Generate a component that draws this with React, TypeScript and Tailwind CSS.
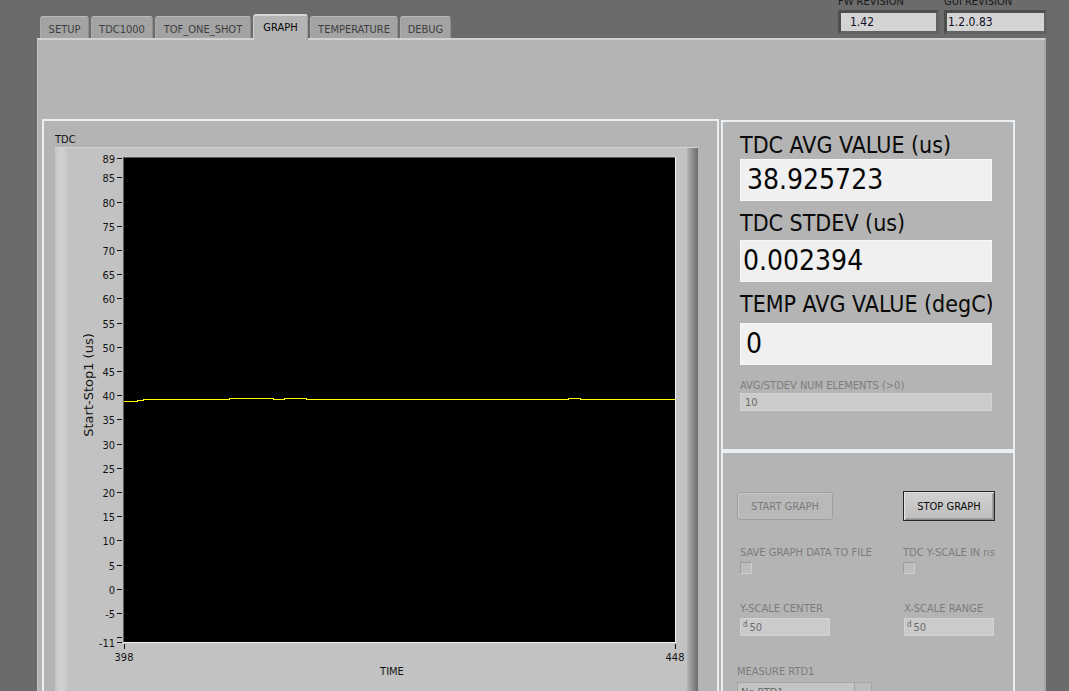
import React from "react";

const tabs: { label: string; w: string; active?: boolean }[] = [
  { label: "SETUP", w: "w-[49px]" },
  { label: "TDC1000", w: "w-[62px]" },
  { label: "TOF_ONE_SHOT", w: "w-[96px]" },
  { label: "GRAPH", w: "w-[55px]", active: true },
  { label: "TEMPERATURE", w: "w-[88px]" },
  { label: "DEBUG", w: "w-[51px]" },
];

const yTicks = [89, 85, 80, 75, 70, 65, 60, 55, 50, 45, 40, 35, 30, 25, 20, 15, 10, 5, 0, -5, -11];
const yOf = (v: number) => 494 - 4.84 * (v + 11);

const linePts: [number, number][] = [
  [124, 401], [137, 401], [137, 400], [143, 400], [143, 399], [229, 399], [229, 398],
  [273, 398], [273, 399], [284, 399], [284, 398], [306, 398], [306, 399], [568, 399],
  [568, 398], [580, 398], [580, 399], [675, 399],
];

function Graph() {
  const pts = linePts.map(([x, y]) => `${x - 67},${y - 147 - 0.5}`).join(" ");
  return (
    <svg width="620" height="560" className="block">
      <rect x="57" y="10" width="551" height="484" fill="#000" />
      <line x1="56.5" y1="9" x2="56.5" y2="495" stroke="#5c5c5c" />
      <line x1="56" y1="9.5" x2="609" y2="9.5" stroke="#5c5c5c" />
      <line x1="56" y1="494.5" x2="609" y2="494.5" stroke="#f4f4f4" />
      <line x1="608.5" y1="9" x2="608.5" y2="495" stroke="#f4f4f4" />
      <polyline points={pts} fill="none" stroke="#ffff00" strokeWidth="1" shapeRendering="crispEdges" />
      {yTicks.map((v) => {
        const y = Math.round(yOf(v)) + 0.5;
        return (
          <g key={v}>
            <line x1="50" y1={y} x2="55" y2={y} stroke="#111" />
            <text x="48" y={y + 4} textAnchor="end" fontSize="11" fill="#141414">
              {v}
            </text>
          </g>
        );
      })}
      <line x1="50" y1={Math.round(yOf(-10)) + 0.5} x2="55" y2={Math.round(yOf(-10)) + 0.5} stroke="#111" />
      <line x1="57.5" y1="496" x2="57.5" y2="501" stroke="#111" />
      <line x1="608.5" y1="496" x2="608.5" y2="501" stroke="#111" />
      <text x="57" y="513" textAnchor="middle" fontSize="11" fill="#141414">398</text>
      <text x="608" y="513" textAnchor="middle" fontSize="11" fill="#141414">448</text>
      <text x="325" y="527" textAnchor="middle" fontSize="11" fill="#141414">TIME</text>
      <text
        x="21"
        y="237"
        textAnchor="middle"
        dominantBaseline="central"
        fontSize="13"
        fill="#141414"
        fontFamily="'DejaVu Sans', sans-serif"
        transform="rotate(-90 21 237)"
      >
        Start-Stop1 (us)
      </text>
    </svg>
  );
}

function Rev({ label, value, w, pl }: { label: string; value: string; w: string; pl: string }) {
  return (
    <div className={`${w} flex flex-col`}>
      <div className="-mt-[5px] h-[13px] text-[11px] leading-[13px] text-[#1a1a1a] whitespace-nowrap">{label}</div>
      <div className="mt-[2px] h-[24px] border-[3px] border-t-[#4e4e4e] border-l-[#4e4e4e] border-r-[#626262] border-b-[#626262] bg-[#d4d4d4] flex items-center">
        <span className={`${pl} text-[12px] leading-[14px] text-[#10102a]`}>{value}</span>
      </div>
    </div>
  );
}

function BigField({ label, value, labelMt, boxMt, valuePl }: { label: string; value: string; labelMt: string; boxMt: string; valuePl: string }) {
  return (
    <>
      <div className={`${labelMt} text-[23px] leading-[25px] text-[#0a0a0a] whitespace-nowrap`}>{label}</div>
      <div className={`${boxMt} h-[42px] w-[252px] bg-[#f0f0f0] border border-[#f7f7f7] flex items-center`}>
        <span className={`${valuePl} text-[28px] leading-[40px] text-[#050505]`}>{value}</span>
      </div>
    </>
  );
}

function Check({ label }: { label: string }) {
  return (
    <div className="flex flex-col">
      <div className="text-[11px] leading-[13px] text-[#7c7c7c] whitespace-nowrap">{label}</div>
      <div className="mt-[3px] w-[12px] h-[12px] bg-[#bdbdbd] border border-t-[#9c9c9c] border-l-[#9c9c9c] border-r-[#cfcfcf] border-b-[#cfcfcf]" />
    </div>
  );
}

function Numeric({ label, value }: { label: string; value: string }) {
  return (
    <div className="flex flex-col">
      <div className="text-[11px] leading-[13px] text-[#7c7c7c] whitespace-nowrap">{label}</div>
      <div className="mt-[3px] w-[90px] h-[18px] bg-[#cbcbcb] border border-[#d3d3d3] flex items-center pl-[2px]">
        <span className="text-[8px] leading-[8px] text-[#666] self-start mt-[2px]">d</span>
        <span className="ml-[2px] text-[11px] leading-[13px] text-[#6a6a6a]">{value}</span>
      </div>
    </div>
  );
}

export default function App() {
  return (
    <div className="relative w-[1069px] h-[691px] overflow-hidden bg-[#6b6b6b] font-['DejaVu_Sans_Condensed','DejaVu_Sans',sans-serif] text-[11px] leading-[13px]">
      {/* header */}
      <div className="flex h-[38px]">
        <div className="flex items-end gap-[2px] pl-[40px]">
          {tabs.map((t) =>
            t.active ? (
              <div
                key={t.label}
                className={`${t.w} relative z-10 -mb-[3px] h-[27px] bg-[#b4b4b4] rounded-t-[3px] border-t-2 border-t-[#d6d6d6] border-l border-l-[#cdcdcd] border-r border-r-[#9a9a9a] text-center pt-[5px] text-[11px] leading-[13px] text-[#050505]`}
              >
                {t.label}
              </div>
            ) : (
              <div
                key={t.label}
                className={`${t.w} h-[22px] bg-[#a3a3a3] rounded-t-[3px] border-t border-t-[#b8b8b8] border-l border-l-[#adadad] border-r border-r-[#8e8e8e] text-center pt-[6px] text-[11px] leading-[13px] text-[#3e3e3e]`}
              >
                {t.label}
              </div>
            )
          )}
        </div>
        <div className="ml-auto mr-[22px] flex gap-[5px]">
          <Rev label="FW REVISION" value="1.42" w="w-[101px]" pl="pl-[9px]" />
          <Rev label="GUI REVISION" value="1.2.0.83" w="w-[103px]" pl="pl-[1px]" />
        </div>
      </div>

      {/* tab panel */}
      <div className="ml-[37px] w-[1009px] h-[653px] bg-[#b4b4b4] border-t-2 border-t-[#d0d0d0] border-l border-l-[#c6c6c6] border-r-2 border-r-[#a6a6a6]">
        <div className="flex items-start mt-[79px] ml-[4px]">
          {/* graph box */}
          <div className="w-[677px] h-[600px] border-2 border-[#e9eef3]">
            <div className="ml-[11px] mt-[12px] text-[11px] leading-[13px] text-[#111]">TDC</div>
            <div className="ml-[11px] mt-[1px] w-[643px] h-[560px] flex bg-[#c2c2c2] border-t border-t-[#d3d3d3]">
              <div className="w-[12px] h-full bg-linear-to-r from-[#c6c6c6] via-[#d2d2d2] to-[#c8c8c8]" />
              <Graph />
              <div className="w-[11px] h-full bg-linear-to-r from-[#b4b4b4] via-[#8e8e8e] to-[#6c6c6c]" />
            </div>
          </div>

          {/* right column */}
          <div className="ml-[2px] mt-[1px] w-[294px] flex flex-col">
            <div className="h-[331px] border-2 border-[#e9eef3] pl-[17px] pt-[11px] flex flex-col">
              <BigField label="TDC AVG VALUE (us)" value="38.925723" labelMt="mt-0" boxMt="mt-[1px]" valuePl="pl-[6px]" />
              <BigField label="TDC STDEV (us)" value="0.002394" labelMt="mt-[10px]" boxMt="mt-[4px]" valuePl="pl-[2px]" />
              <BigField label="TEMP AVG VALUE (degC)" value="0" labelMt="mt-[10px]" boxMt="mt-[6px]" valuePl="pl-[5px]" />
              <div className="mt-[14px] text-[11px] leading-[13px] text-[#7c7c7c] whitespace-nowrap">AVG/STDEV NUM ELEMENTS (&gt;0)</div>
              <div className="mt-[1px] w-[252px] h-[18px] bg-[#cbcbcb] border border-[#d3d3d3] flex items-center pl-[4px]">
                <span className="text-[11px] leading-[13px] text-[#6a6a6a]">10</span>
              </div>
            </div>
            <div className="h-[300px] border-2 border-[#e9eef3] flex flex-col">
              <div className="mt-[38px] ml-[14px] flex items-center">
                <div className="w-[96px] h-[28px] rounded-[3px] border border-[#9e9e9e] bg-[#b9b9b9] shadow-[inset_1px_1px_0_#c8c8c8] flex items-center justify-center text-[11px] leading-[13px] text-[#7a7a7a]">
                  START GRAPH
                </div>
                <div className="ml-[70px] w-[92px] h-[30px] border border-[#262626] bg-linear-to-b from-[#d2d2d2] to-[#bdbdbd] shadow-[inset_1px_1px_0_#e4e4e4,inset_-1px_-1px_0_#8a8a8a,inset_2px_2px_0_#cacaca,inset_-2px_-2px_0_#a0a0a0] flex items-center justify-center text-[11px] leading-[13px] text-[#0a0a0a]">
                  STOP GRAPH
                </div>
              </div>
              <div className="mt-[25px] ml-[17px] flex">
                <div className="w-[163px]">
                  <Check label="SAVE GRAPH DATA TO FILE" />
                </div>
                <Check label="TDC Y-SCALE IN ns" />
              </div>
              <div className="mt-[28px] ml-[17px] flex">
                <div className="w-[164px]">
                  <Numeric label="Y-SCALE CENTER" value="50" />
                </div>
                <Numeric label="X-SCALE RANGE" value="50" />
              </div>
              <div className="mt-[29px] ml-[14px] flex flex-col">
                <div className="text-[11px] leading-[13px] text-[#7c7c7c] whitespace-nowrap">MEASURE RTD1</div>
                <div className="mt-[4px] w-[135px] h-[20px] bg-[#c4c4c4] border border-[#a6a6a6] flex">
                  <span className="pl-[3px] pt-[3px] flex-1 text-[11px] leading-[13px] text-[#6a6a6a]">No RTD1</span>
                  <div className="w-[17px] h-full border-l border-[#a6a6a6] bg-[#bcbcbc]" />
                </div>
              </div>
            </div>
          </div>
        </div>
      </div>
    </div>
  );
}
